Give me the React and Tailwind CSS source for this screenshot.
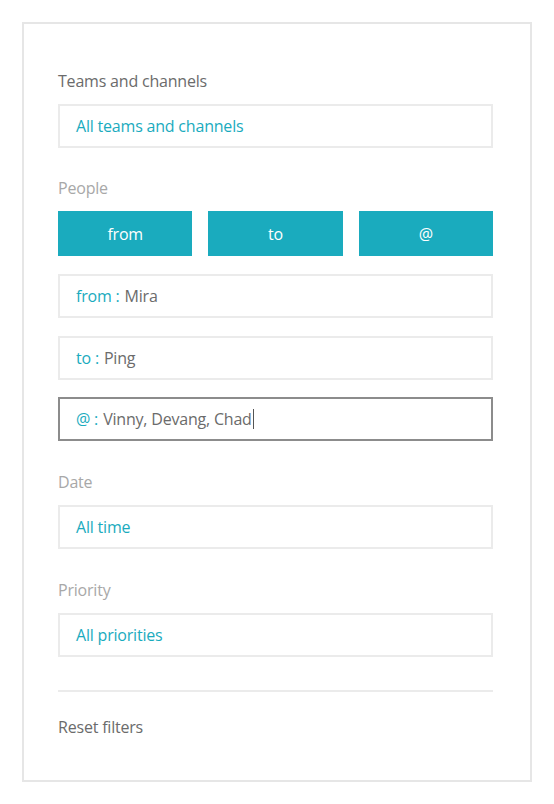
import { useState } from "react";

const FONT = "font-['Segoe_UI','Open_Sans','Noto_Sans',sans-serif]";

function Label({ children, dark }) {
  return (
    <div className={`h-6 leading-6 text-[16px] tracking-[-0.2px] ${dark ? "text-[#6b6b6b]" : "text-[#a8a8a8]"}`}>
      {children}
    </div>
  );
}

function Box({ children, focused }) {
  return (
    <div
      className={`h-11 flex items-center pl-4 text-[16px] tracking-[-0.2px] border-2 ${
        focused ? "border-[#8c8c8c]" : "border-[#ebebeb]"
      }`}
    >
      {children}
    </div>
  );
}

export default function App() {
  const [people] = useState([
    { key: "from", value: "Mira", gap: "mt-[18px]" },
    { key: "to", value: "Ping", gap: "mt-[18px]" },
    { key: "@", value: "Vinny, Devang, Chad", focused: true, gap: "mt-[17px]" },
  ]);

  return (
    <div className={`min-h-screen bg-white pt-[22px] pl-[22px] ${FONT}`}>
      <div className="w-[510px] h-[760px] border-2 border-[#e6e6e6] pt-[45px] pl-[34px]">
        <div className="w-[435px]">

          {/* Teams */}
          <Label dark>Teams and channels</Label>
          <div className="mt-[11px]">
            <Box>
              <span className="text-[#1aabbe]">All teams and channels</span>
            </Box>
          </div>

          {/* People */}
          <div className="mt-[28px]">
            <Label>People</Label>
          </div>
          <div className="mt-[11px] grid grid-cols-3 gap-4">
            {["from", "to", "@"].map((b) => (
              <button
                key={b}
                className="h-[45px] bg-[#1aabbe] text-white text-[16px] tracking-[-0.2px]"
              >
                {b}
              </button>
            ))}
          </div>

          {people.map((p) => (
            <div key={p.key} className={p.gap}>
              <Box focused={p.focused}>
                <span className="text-[#1aabbe]">{p.key} :</span>
                <span className="text-[#6b6b6b] ml-[5px]">{p.value}</span>
                {p.focused && (
                  <span className="w-px h-5 bg-[#555] ml-px"></span>
                )}
              </Box>
            </div>
          ))}

          {/* Date */}
          <div className="mt-[29px]">
            <Label>Date</Label>
          </div>
          <div className="mt-[11px]">
            <Box>
              <span className="text-[#1aabbe]">All time</span>
            </Box>
          </div>

          {/* Priority */}
          <div className="mt-[29px]">
            <Label>Priority</Label>
          </div>
          <div className="mt-[11px]">
            <Box>
              <span className="text-[#1aabbe]">All priorities</span>
            </Box>
          </div>

          <div className="mt-[33px] h-[2px] bg-[#ebebeb]"></div>

          <div className="mt-[23px]">
            <Label dark>Reset filters</Label>
          </div>
        </div>
      </div>
    </div>
  );
}
